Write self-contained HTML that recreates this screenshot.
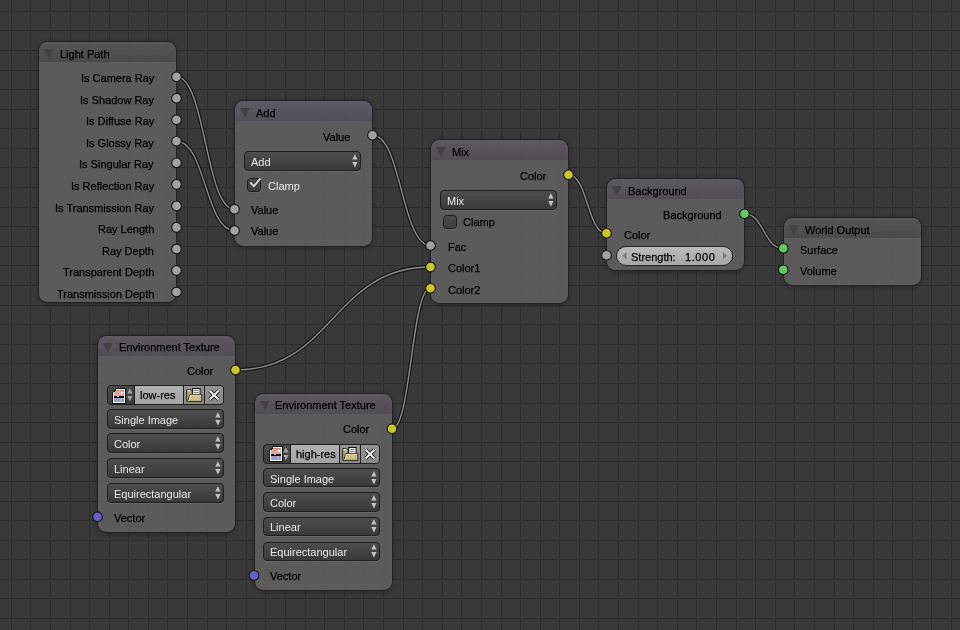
<!DOCTYPE html><html><head><meta charset="utf-8"><style>
*{margin:0;padding:0;box-sizing:border-box}
html,body{width:960px;height:630px;overflow:hidden;background:#393939}
body{position:relative;font-family:"Liberation Sans", sans-serif;font-size:11px}
.abs{position:absolute}
.t{position:absolute;white-space:nowrap;font-size:11px;line-height:13px;will-change:transform;-webkit-text-stroke:0.25px currentColor}
.w{-webkit-text-stroke:0}
.bdy{position:absolute;left:0;right:0;bottom:0;background:rgba(96,96,96,0.88)}
.node{position:absolute;border:1px solid #222;border-radius:9.5px;overflow:hidden;box-shadow:0 1px 5px rgba(0,0,0,0.3), inset 0 0 0 2px rgba(255,255,255,0.05)}
.hdr{position:absolute;left:0;top:0;right:0}
.dd{position:absolute;border:1px solid #1e1e1e;border-radius:4px;background:linear-gradient(#4d4d4d,#3a3a3a);box-shadow:0 1px 0 rgba(255,255,255,0.08)}
.cb{position:absolute;width:13.5px;height:13.5px;border:1px solid #1e1e1e;border-radius:3.5px;background:linear-gradient(#4a4a4a,#3e3e3e);box-shadow:0 1px 0 rgba(255,255,255,0.08)}
.sl{position:absolute;border:1px solid #262626;border-radius:10px;background:linear-gradient(#bababa,#a6a6a6)}
.ir{position:absolute;border:1px solid #1e1e1e;border-radius:4px;overflow:hidden;background:#1e1e1e}
.seg{position:absolute;top:0;bottom:0}
</style></head><body><svg class="abs" width="960" height="630" style="left:0;top:0" shape-rendering="crispEdges"><path d="M11,0h1V630h-1ZM30,0h1V630h-1ZM50,0h1V630h-1ZM70,0h1V630h-1ZM89,0h1V630h-1ZM109,0h1V630h-1ZM128,0h1V630h-1ZM148,0h1V630h-1ZM167,0h1V630h-1ZM187,0h1V630h-1ZM207,0h1V630h-1ZM226,0h1V630h-1ZM246,0h1V630h-1ZM265,0h1V630h-1ZM285,0h1V630h-1ZM305,0h1V630h-1ZM324,0h1V630h-1ZM344,0h1V630h-1ZM363,0h1V630h-1ZM383,0h1V630h-1ZM403,0h1V630h-1ZM422,0h1V630h-1ZM442,0h1V630h-1ZM461,0h1V630h-1ZM481,0h1V630h-1ZM501,0h1V630h-1ZM520,0h1V630h-1ZM540,0h1V630h-1ZM559,0h1V630h-1ZM579,0h1V630h-1ZM598,0h1V630h-1ZM618,0h1V630h-1ZM638,0h1V630h-1ZM657,0h1V630h-1ZM677,0h1V630h-1ZM696,0h1V630h-1ZM716,0h1V630h-1ZM736,0h1V630h-1ZM755,0h1V630h-1ZM775,0h1V630h-1ZM794,0h1V630h-1ZM814,0h1V630h-1ZM834,0h1V630h-1ZM853,0h1V630h-1ZM873,0h1V630h-1ZM892,0h1V630h-1ZM912,0h1V630h-1ZM931,0h1V630h-1ZM951,0h1V630h-1ZM0,11v1H960v-1ZM0,30v1H960v-1ZM0,50v1H960v-1ZM0,70v1H960v-1ZM0,89v1H960v-1ZM0,109v1H960v-1ZM0,128v1H960v-1ZM0,148v1H960v-1ZM0,167v1H960v-1ZM0,187v1H960v-1ZM0,207v1H960v-1ZM0,226v1H960v-1ZM0,246v1H960v-1ZM0,265v1H960v-1ZM0,285v1H960v-1ZM0,305v1H960v-1ZM0,324v1H960v-1ZM0,344v1H960v-1ZM0,363v1H960v-1ZM0,383v1H960v-1ZM0,403v1H960v-1ZM0,422v1H960v-1ZM0,442v1H960v-1ZM0,461v1H960v-1ZM0,481v1H960v-1ZM0,501v1H960v-1ZM0,520v1H960v-1ZM0,540v1H960v-1ZM0,559v1H960v-1ZM0,579v1H960v-1ZM0,598v1H960v-1ZM0,618v1H960v-1ZM0,638v1H960v-1Z" fill="#2d2d2d"/></svg><svg class="abs" width="960" height="630" style="left:0;top:0"><g fill="none" stroke="#161616" stroke-width="3.8"><path d="M176.5,76.7 C205.5,76.7 205.5,209.2 234.5,209.2"/><path d="M176.5,141.29 C205.5,141.29 205.5,230.5 234.5,230.5"/><path d="M372.5,135.3 C401.5,135.3 401.5,245.5 430.5,245.5"/><path d="M235.5,370 C333,370 333,267 430.5,267"/><path d="M392,428.7 C411.25,428.7 411.25,288.3 430.5,288.3"/><path d="M568.5,174.7 C587.5,174.7 587.5,233.3 606.5,233.3"/><path d="M744.5,213.8 C763.9,213.8 763.9,248.3 783.3,248.3"/></g><g fill="none" stroke="#8c8c8c" stroke-width="1.4"><path d="M176.5,76.7 C205.5,76.7 205.5,209.2 234.5,209.2"/><path d="M176.5,141.29 C205.5,141.29 205.5,230.5 234.5,230.5"/><path d="M372.5,135.3 C401.5,135.3 401.5,245.5 430.5,245.5"/><path d="M235.5,370 C333,370 333,267 430.5,267"/><path d="M392,428.7 C411.25,428.7 411.25,288.3 430.5,288.3"/><path d="M568.5,174.7 C587.5,174.7 587.5,233.3 606.5,233.3"/><path d="M744.5,213.8 C763.9,213.8 763.9,248.3 783.3,248.3"/></g></svg><div class="node" style="left:38px;top:41px;width:139px;height:262px"><div class="hdr" style="height:20px;background:linear-gradient(rgba(91,91,91,0.85),rgba(77,77,77,0.85))"></div><div class="bdy" style="top:20px"></div></div><svg class="abs" style="left:44px;top:48.6px" width="10" height="10"><path d="M0,0 L9.8,0 L4.9,9.7 Z" fill="#424242"/></svg><div class="t" style="left:60.1px;top:47.8px;color:#000">Light Path</div><div class="t" style="right:806px;top:71.9px;color:#000">Is Camera Ray</div><div class="t" style="right:806px;top:93.5px;color:#000">Is Shadow Ray</div><div class="t" style="right:806px;top:115.1px;color:#000">Is Diffuse Ray</div><div class="t" style="right:806px;top:136.7px;color:#000">Is Glossy Ray</div><div class="t" style="right:806px;top:158.3px;color:#000">Is Singular Ray</div><div class="t" style="right:806px;top:179.9px;color:#000">Is Reflection Ray</div><div class="t" style="right:806px;top:201.5px;color:#000">Is Transmission Ray</div><div class="t" style="right:806px;top:223.1px;color:#000">Ray Length</div><div class="t" style="right:806px;top:244.7px;color:#000">Ray Depth</div><div class="t" style="right:806px;top:266.3px;color:#000">Transparent Depth</div><div class="t" style="right:806px;top:287.9px;color:#000">Transmission Depth</div><div class="node" style="left:234px;top:100px;width:139px;height:147px"><div class="hdr" style="height:20px;background:linear-gradient(rgba(96,97,108,0.85),rgba(84,85,96,0.85))"></div><div class="bdy" style="top:20px"></div></div><svg class="abs" style="left:240px;top:107.6px" width="10" height="10"><path d="M0,0 L9.8,0 L4.9,9.7 Z" fill="#424242"/></svg><div class="t" style="left:256.1px;top:106.8px;color:#000">Add</div><div class="t" style="right:609.7px;top:130.9px;color:#000">Value</div><div class="dd" style="left:244.4px;top:151.3px;width:116.4px;height:19.5px"></div><div class="t w" style="left:250.9px;top:155.8px;color:#e8e8e8">Add</div><svg class="abs" style="left:351.6px;top:154.1px" width="7" height="14"><path d="M0.3,5.6 L5.5,5.6 L2.9,0.2 Z" fill="#c4c4c4"/><path d="M0.3,8 L5.5,8 L2.9,13.4 Z" fill="#c4c4c4"/></svg><div class="cb" style="left:247.2px;top:178.1px"></div><svg class="abs" style="left:247.2px;top:178.1px" width="16" height="16"><path d="M3.2,4.6 L6.9,8.4 L13.4,0.6" fill="none" stroke="rgba(0,0,0,0.35)" stroke-width="3.4"/><path d="M3.2,4.4 L6.9,8.2 L13.4,0.4" fill="none" stroke="#d2d2d2" stroke-width="2.1"/></svg><div class="t w" style="left:268px;top:180.1px;color:#e8e8e8">Clamp</div><div class="t" style="left:251.3px;top:203.6px;color:#000">Value</div><div class="t" style="left:251.3px;top:225.2px;color:#000">Value</div><div class="node" style="left:430px;top:139px;width:139px;height:165px"><div class="hdr" style="height:20px;background:linear-gradient(rgba(97,95,99,0.85),rgba(84,82,88,0.85))"></div><div class="bdy" style="top:20px"></div></div><svg class="abs" style="left:436px;top:146.6px" width="10" height="10"><path d="M0,0 L9.8,0 L4.9,9.7 Z" fill="#424242"/></svg><div class="t" style="left:452.1px;top:145.8px;color:#000">Mix</div><div class="t" style="right:413.7px;top:169.9px;color:#000">Color</div><div class="dd" style="left:440.3px;top:190.3px;width:116.4px;height:19.4px"></div><div class="t w" style="left:446.8px;top:194.7px;color:#e8e8e8">Mix</div><svg class="abs" style="left:547.5px;top:193.1px" width="7" height="14"><path d="M0.3,5.6 L5.5,5.6 L2.9,0.2 Z" fill="#c4c4c4"/><path d="M0.3,8 L5.5,8 L2.9,13.4 Z" fill="#c4c4c4"/></svg><div class="cb" style="left:443.3px;top:215px"></div><div class="t" style="left:463.3px;top:215.7px;color:#000">Clamp</div><div class="t" style="left:447.5px;top:240.7px;color:#000">Fac</div><div class="t" style="left:447.5px;top:261.6px;color:#000">Color1</div><div class="t" style="left:447.5px;top:283.6px;color:#000">Color2</div><div class="node" style="left:606px;top:178.3px;width:139px;height:92.7px"><div class="hdr" style="height:20px;background:linear-gradient(rgba(97,95,99,0.85),rgba(84,82,88,0.85))"></div><div class="bdy" style="top:20px"></div></div><svg class="abs" style="left:612px;top:185.9px" width="10" height="10"><path d="M0,0 L9.8,0 L4.9,9.7 Z" fill="#424242"/></svg><div class="t" style="left:628.1px;top:185.1px;color:#000">Background</div><div class="t" style="right:238px;top:208.6px;color:#000">Background</div><div class="t" style="left:623.7px;top:228.7px;color:#000">Color</div><div class="sl" style="left:616.2px;top:245.7px;width:116.8px;height:20.1px"></div><svg class="abs" style="left:621px;top:251px" width="110" height="10"><path d="M1.5,4.8 L5.5,1 L5.5,8.6 Z" fill="#7a7a7a"/><path d="M106,4.8 L102,1 L102,8.6 Z" fill="#7a7a7a"/></svg><div class="t" style="left:631.3px;top:250.7px;color:#000">Strength:</div><div class="t" style="right:244.5px;top:250.7px;color:#000"><span style="letter-spacing:0.6px">1.000</span></div><div class="node" style="left:782.8px;top:217.2px;width:139px;height:68.8px"><div class="hdr" style="height:20px;background:linear-gradient(rgba(91,91,91,0.85),rgba(77,77,77,0.85))"></div><div class="bdy" style="top:20px"></div></div><svg class="abs" style="left:788.8px;top:224.8px" width="10" height="10"><path d="M0,0 L9.8,0 L4.9,9.7 Z" fill="#424242"/></svg><div class="t" style="left:804.9px;top:224px;color:#000">World Output</div><div class="t" style="left:799.7px;top:243.6px;color:#000">Surface</div><div class="t" style="left:799.7px;top:265.1px;color:#000">Volume</div><div class="node" style="left:97px;top:335px;width:139px;height:197.6px"><div class="hdr" style="height:20px;background:linear-gradient(rgba(97,95,99,0.85),rgba(84,82,88,0.85))"></div><div class="bdy" style="top:20px"></div></div><svg class="abs" style="left:103px;top:342.6px" width="10" height="10"><path d="M0,0 L9.8,0 L4.9,9.7 Z" fill="#424242"/></svg><div class="t" style="left:119.1px;top:340.8px;color:#000">Environment Texture</div><div class="t" style="right:747px;top:364.6px;color:#000">Color</div><div class="ir" style="left:107.3px;top:385.3px;width:117px;height:19.6px"><div class="seg" style="left:0;width:26px;background:linear-gradient(#4a4a4a,#3c3c3c)"></div><div class="seg" style="left:26.6px;width:48.3px;background:linear-gradient(#b0b0b0,#a4a4a4)"></div><div class="seg" style="left:75.6px;width:20.5px;background:linear-gradient(#959595,#888888)"></div><div class="seg" style="left:96.7px;width:19.3px;background:linear-gradient(#959595,#888888)"></div></div><svg class="abs" style="left:112px;top:388px" width="14" height="16" shape-rendering="crispEdges"><path d="M0,4 L4,0 L14,0 L14,16 L0,16 Z" fill="#111"/><path d="M1,4 L4,1 L13,1 L13,15 L1,15 Z" fill="#fafafa"/><rect x="4" y="2" width="8" height="6" fill="#dfa39b"/><rect x="2" y="4" width="10" height="4" fill="#dfa39b"/><rect x="4" y="2" width="8" height="1" fill="#c98d86"/><rect x="2" y="8" width="10" height="2" fill="#0a0a0a"/><rect x="5" y="8" width="2" height="1" fill="#e8b0a8"/><rect x="2" y="10" width="10" height="4" fill="#9a9ac6"/><rect x="8" y="10" width="2" height="3" fill="#b0b0d6"/><rect x="9" y="4" width="2" height="2" fill="#fff"/><rect x="3" y="2" width="1" height="1" fill="#111"/><rect x="2" y="3" width="1" height="1" fill="#111"/><rect x="3" y="3" width="1" height="1" fill="#c0c0c0"/></svg><svg class="abs" style="left:126.5px;top:388px" width="7" height="14"><path d="M0.3,5.6 L5.5,5.6 L2.9,0.2 Z" fill="#a2a2a2"/><path d="M0.3,8 L5.5,8 L2.9,13.4 Z" fill="#a2a2a2"/></svg><div class="t" style="left:140px;top:388.9px;color:#000">low-res</div><svg class="abs" style="left:186px;top:388px" width="17" height="15"><path d="M0.7,1.7 L4.8,1.7 L6.2,3 L6.2,13.3 L0.7,13.3 Z" fill="#b3a675" stroke="#2a2616" stroke-width="1"/><path d="M1.6,2.6 L4.2,2.6" stroke="#fff" stroke-width="1.3"/><rect x="6.7" y="0.5" width="7.4" height="6" fill="#f4f4f4" stroke="#0a0a0a" stroke-width="1"/><path d="M8.3,2.5 H12.5 M8.3,4.5 H12.5" stroke="#666" stroke-width="0.9"/><path d="M4,6.6 L15.8,6.6 L15.8,13.4 L1,13.4 L2.2,12.6 L3.4,7.6 Z" fill="#cbbf8c" stroke="#2a2616" stroke-width="1"/><path d="M1.8,13 L3.2,12.2 L4.5,7.3 L15,7.3" fill="none" stroke="#f4ecc4" stroke-width="0.9"/></svg><svg class="abs" style="left:208px;top:389px" width="13" height="13"><path d="M1.7,1.7 L10.5,10.5 M10.5,1.7 L1.7,10.5" stroke="#080808" stroke-width="3.7"/><path d="M1.7,1.7 L10.5,10.5 M10.5,1.7 L1.7,10.5" stroke="#f0f0f0" stroke-width="2.1"/></svg><div class="dd" style="left:107.3px;top:409px;width:116.5px;height:19.8px"></div><div class="t w" style="left:113.8px;top:413.8px;color:#e8e8e8">Single Image</div><svg class="abs" style="left:214.6px;top:411.8px" width="7" height="14"><path d="M0.3,5.6 L5.5,5.6 L2.9,0.2 Z" fill="#c4c4c4"/><path d="M0.3,8 L5.5,8 L2.9,13.4 Z" fill="#c4c4c4"/></svg><div class="dd" style="left:107.3px;top:433.4px;width:116.5px;height:19.8px"></div><div class="t w" style="left:113.8px;top:438.2px;color:#e8e8e8">Color</div><svg class="abs" style="left:214.6px;top:436.2px" width="7" height="14"><path d="M0.3,5.6 L5.5,5.6 L2.9,0.2 Z" fill="#c4c4c4"/><path d="M0.3,8 L5.5,8 L2.9,13.4 Z" fill="#c4c4c4"/></svg><div class="dd" style="left:107.3px;top:457.9px;width:116.5px;height:19.8px"></div><div class="t w" style="left:113.8px;top:462.7px;color:#e8e8e8">Linear</div><svg class="abs" style="left:214.6px;top:460.7px" width="7" height="14"><path d="M0.3,5.6 L5.5,5.6 L2.9,0.2 Z" fill="#c4c4c4"/><path d="M0.3,8 L5.5,8 L2.9,13.4 Z" fill="#c4c4c4"/></svg><div class="dd" style="left:107.3px;top:482.8px;width:116.5px;height:19.8px"></div><div class="t w" style="left:113.8px;top:487.6px;color:#e8e8e8">Equirectangular</div><svg class="abs" style="left:214.6px;top:485.6px" width="7" height="14"><path d="M0.3,5.6 L5.5,5.6 L2.9,0.2 Z" fill="#c4c4c4"/><path d="M0.3,8 L5.5,8 L2.9,13.4 Z" fill="#c4c4c4"/></svg><div class="t" style="left:114px;top:511.7px;color:#000">Vector</div><div class="node" style="left:253.5px;top:393.3px;width:139px;height:197.6px"><div class="hdr" style="height:20px;background:linear-gradient(rgba(97,95,99,0.85),rgba(84,82,88,0.85))"></div><div class="bdy" style="top:20px"></div></div><svg class="abs" style="left:259.5px;top:400.9px" width="10" height="10"><path d="M0,0 L9.8,0 L4.9,9.7 Z" fill="#424242"/></svg><div class="t" style="left:275.1px;top:398.9px;color:#000">Environment Texture</div><div class="t" style="right:590.9px;top:423.3px;color:#000">Color</div><div class="ir" style="left:263.4px;top:444px;width:117px;height:19.6px"><div class="seg" style="left:0;width:26px;background:linear-gradient(#4a4a4a,#3c3c3c)"></div><div class="seg" style="left:26.6px;width:48.3px;background:linear-gradient(#b0b0b0,#a4a4a4)"></div><div class="seg" style="left:75.6px;width:20.5px;background:linear-gradient(#959595,#888888)"></div><div class="seg" style="left:96.7px;width:19.3px;background:linear-gradient(#959595,#888888)"></div></div><svg class="abs" style="left:269px;top:446px" width="14" height="16" shape-rendering="crispEdges"><path d="M0,4 L4,0 L14,0 L14,16 L0,16 Z" fill="#111"/><path d="M1,4 L4,1 L13,1 L13,15 L1,15 Z" fill="#fafafa"/><rect x="4" y="2" width="8" height="6" fill="#dfa39b"/><rect x="2" y="4" width="10" height="4" fill="#dfa39b"/><rect x="4" y="2" width="8" height="1" fill="#c98d86"/><rect x="2" y="8" width="10" height="2" fill="#0a0a0a"/><rect x="5" y="8" width="2" height="1" fill="#e8b0a8"/><rect x="2" y="10" width="10" height="4" fill="#9a9ac6"/><rect x="8" y="10" width="2" height="3" fill="#b0b0d6"/><rect x="9" y="4" width="2" height="2" fill="#fff"/><rect x="3" y="2" width="1" height="1" fill="#111"/><rect x="2" y="3" width="1" height="1" fill="#111"/><rect x="3" y="3" width="1" height="1" fill="#c0c0c0"/></svg><svg class="abs" style="left:282.6px;top:446.7px" width="7" height="14"><path d="M0.3,5.6 L5.5,5.6 L2.9,0.2 Z" fill="#a2a2a2"/><path d="M0.3,8 L5.5,8 L2.9,13.4 Z" fill="#a2a2a2"/></svg><div class="t" style="left:296.1px;top:447.6px;color:#000">high-res</div><svg class="abs" style="left:342.1px;top:446.7px" width="17" height="15"><path d="M0.7,1.7 L4.8,1.7 L6.2,3 L6.2,13.3 L0.7,13.3 Z" fill="#b3a675" stroke="#2a2616" stroke-width="1"/><path d="M1.6,2.6 L4.2,2.6" stroke="#fff" stroke-width="1.3"/><rect x="6.7" y="0.5" width="7.4" height="6" fill="#f4f4f4" stroke="#0a0a0a" stroke-width="1"/><path d="M8.3,2.5 H12.5 M8.3,4.5 H12.5" stroke="#666" stroke-width="0.9"/><path d="M4,6.6 L15.8,6.6 L15.8,13.4 L1,13.4 L2.2,12.6 L3.4,7.6 Z" fill="#cbbf8c" stroke="#2a2616" stroke-width="1"/><path d="M1.8,13 L3.2,12.2 L4.5,7.3 L15,7.3" fill="none" stroke="#f4ecc4" stroke-width="0.9"/></svg><svg class="abs" style="left:364.1px;top:447.7px" width="13" height="13"><path d="M1.7,1.7 L10.5,10.5 M10.5,1.7 L1.7,10.5" stroke="#080808" stroke-width="3.7"/><path d="M1.7,1.7 L10.5,10.5 M10.5,1.7 L1.7,10.5" stroke="#f0f0f0" stroke-width="2.1"/></svg><div class="dd" style="left:263.4px;top:467.7px;width:116.5px;height:19.8px"></div><div class="t w" style="left:269.9px;top:472.5px;color:#e8e8e8">Single Image</div><svg class="abs" style="left:370.7px;top:470.5px" width="7" height="14"><path d="M0.3,5.6 L5.5,5.6 L2.9,0.2 Z" fill="#c4c4c4"/><path d="M0.3,8 L5.5,8 L2.9,13.4 Z" fill="#c4c4c4"/></svg><div class="dd" style="left:263.4px;top:492.1px;width:116.5px;height:19.8px"></div><div class="t w" style="left:269.9px;top:496.9px;color:#e8e8e8">Color</div><svg class="abs" style="left:370.7px;top:494.9px" width="7" height="14"><path d="M0.3,5.6 L5.5,5.6 L2.9,0.2 Z" fill="#c4c4c4"/><path d="M0.3,8 L5.5,8 L2.9,13.4 Z" fill="#c4c4c4"/></svg><div class="dd" style="left:263.4px;top:516.6px;width:116.5px;height:19.8px"></div><div class="t w" style="left:269.9px;top:521.4px;color:#e8e8e8">Linear</div><svg class="abs" style="left:370.7px;top:519.4px" width="7" height="14"><path d="M0.3,5.6 L5.5,5.6 L2.9,0.2 Z" fill="#c4c4c4"/><path d="M0.3,8 L5.5,8 L2.9,13.4 Z" fill="#c4c4c4"/></svg><div class="dd" style="left:263.4px;top:541.5px;width:116.5px;height:19.8px"></div><div class="t w" style="left:269.9px;top:546.3px;color:#e8e8e8">Equirectangular</div><svg class="abs" style="left:370.7px;top:544.3px" width="7" height="14"><path d="M0.3,5.6 L5.5,5.6 L2.9,0.2 Z" fill="#c4c4c4"/><path d="M0.3,8 L5.5,8 L2.9,13.4 Z" fill="#c4c4c4"/></svg><div class="t" style="left:270.1px;top:570.4px;color:#000">Vector</div><svg class="abs" width="960" height="630" style="left:0;top:0"><circle cx="176.5" cy="76.7" r="4.85" fill="#a1a1a1" stroke="#161616" stroke-width="1.1"/><circle cx="176.5" cy="98.23" r="4.85" fill="#a1a1a1" stroke="#161616" stroke-width="1.1"/><circle cx="176.5" cy="119.76" r="4.85" fill="#a1a1a1" stroke="#161616" stroke-width="1.1"/><circle cx="176.5" cy="141.29" r="4.85" fill="#a1a1a1" stroke="#161616" stroke-width="1.1"/><circle cx="176.5" cy="162.82" r="4.85" fill="#a1a1a1" stroke="#161616" stroke-width="1.1"/><circle cx="176.5" cy="184.35" r="4.85" fill="#a1a1a1" stroke="#161616" stroke-width="1.1"/><circle cx="176.5" cy="205.88" r="4.85" fill="#a1a1a1" stroke="#161616" stroke-width="1.1"/><circle cx="176.5" cy="227.41" r="4.85" fill="#a1a1a1" stroke="#161616" stroke-width="1.1"/><circle cx="176.5" cy="248.94" r="4.85" fill="#a1a1a1" stroke="#161616" stroke-width="1.1"/><circle cx="176.5" cy="270.47" r="4.85" fill="#a1a1a1" stroke="#161616" stroke-width="1.1"/><circle cx="176.5" cy="292" r="4.85" fill="#a1a1a1" stroke="#161616" stroke-width="1.1"/><circle cx="372.5" cy="135.3" r="4.85" fill="#a1a1a1" stroke="#161616" stroke-width="1.1"/><circle cx="234.5" cy="209.2" r="4.85" fill="#a1a1a1" stroke="#161616" stroke-width="1.1"/><circle cx="234.5" cy="230.5" r="4.85" fill="#a1a1a1" stroke="#161616" stroke-width="1.1"/><circle cx="568.5" cy="174.7" r="4.85" fill="#c7c729" stroke="#161616" stroke-width="1.1"/><circle cx="430.5" cy="245.5" r="4.85" fill="#a1a1a1" stroke="#161616" stroke-width="1.1"/><circle cx="430.5" cy="267" r="4.85" fill="#c7c729" stroke="#161616" stroke-width="1.1"/><circle cx="430.5" cy="288.3" r="4.85" fill="#c7c729" stroke="#161616" stroke-width="1.1"/><circle cx="744.5" cy="213.8" r="4.85" fill="#63c763" stroke="#161616" stroke-width="1.1"/><circle cx="606.5" cy="233.3" r="4.85" fill="#c7c729" stroke="#161616" stroke-width="1.1"/><circle cx="606.5" cy="255.3" r="4.85" fill="#a1a1a1" stroke="#161616" stroke-width="1.1"/><circle cx="783.3" cy="248.3" r="4.85" fill="#63c763" stroke="#161616" stroke-width="1.1"/><circle cx="783.3" cy="269.8" r="4.85" fill="#63c763" stroke="#161616" stroke-width="1.1"/><circle cx="235.5" cy="370" r="4.85" fill="#c7c729" stroke="#161616" stroke-width="1.1"/><circle cx="97.5" cy="516.7" r="4.85" fill="#6363c7" stroke="#161616" stroke-width="1.1"/><circle cx="392" cy="428.7" r="4.85" fill="#c7c729" stroke="#161616" stroke-width="1.1"/><circle cx="254" cy="575.4" r="4.85" fill="#6363c7" stroke="#161616" stroke-width="1.1"/></svg></body></html>
